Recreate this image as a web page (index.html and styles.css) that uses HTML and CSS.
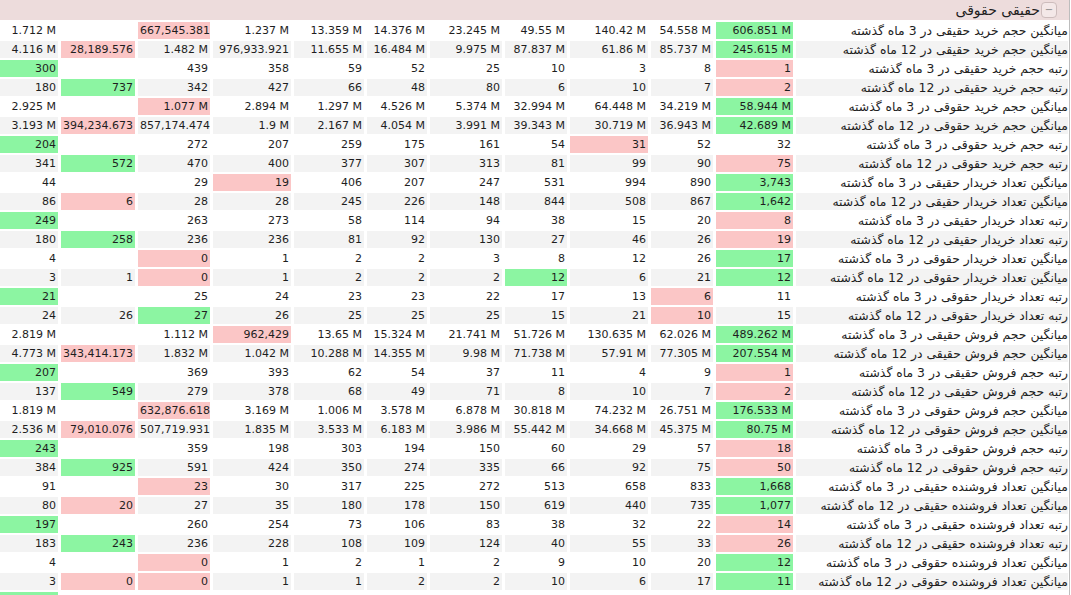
FILE: index.html
```html
<!DOCTYPE html>
<html lang="fa">
<head>
<meta charset="utf-8">
<title>حقیقی حقوقی</title>
<link rel="stylesheet" href="styles.css">
</head>
<body>
<div class="panel" dir="rtl">
  <div class="panel-head">
    <span class="toggle">−</span>
    <span class="title">حقیقی حقوقی</span>
  </div>
  <table class="grid">
    <colgroup>
      <col class="w-label"><col class="w11"><col class="w10"><col class="w9"><col class="w8"><col class="w7"><col class="w6"><col class="w5"><col class="w4"><col class="w3"><col class="w2"><col class="w1">
    </colgroup>
    <tbody>
      <tr><td class="lbl">میانگین حجم خرید حقیقی در 3 ماه گذشته</td><td class="g">606.851 M</td><td>54.558 M</td><td>140.42 M</td><td>49.55 M</td><td>23.245 M</td><td>14.376 M</td><td>13.359 M</td><td>1.237 M</td><td class="r">667,545.381</td><td></td><td>1.712 M</td></tr>
      <tr><td class="lbl">میانگین حجم خرید حقیقی در 12 ماه گذشته</td><td class="g">245.615 M</td><td>85.737 M</td><td>61.86 M</td><td>87.837 M</td><td>9.975 M</td><td>16.484 M</td><td>11.655 M</td><td>976,933.921</td><td>1.482 M</td><td class="r">28,189.576</td><td>4.116 M</td></tr>
      <tr><td class="lbl">رتبه حجم خرید حقیقی در 3 ماه گذشته</td><td class="r">1</td><td>8</td><td>3</td><td>10</td><td>25</td><td>52</td><td>59</td><td>358</td><td>439</td><td></td><td class="g">300</td></tr>
      <tr><td class="lbl">رتبه حجم خرید حقیقی در 12 ماه گذشته</td><td class="r">2</td><td>7</td><td>10</td><td>6</td><td>80</td><td>48</td><td>66</td><td>427</td><td>342</td><td class="g">737</td><td>180</td></tr>
      <tr><td class="lbl">میانگین حجم خرید حقوقی در 3 ماه گذشته</td><td class="g">58.944 M</td><td>34.219 M</td><td>64.448 M</td><td>32.994 M</td><td>5.374 M</td><td>4.526 M</td><td>1.297 M</td><td>2.894 M</td><td class="r">1.077 M</td><td></td><td>2.925 M</td></tr>
      <tr><td class="lbl">میانگین حجم خرید حقوقی در 12 ماه گذشته</td><td class="g">42.689 M</td><td>36.943 M</td><td>30.719 M</td><td>39.343 M</td><td>3.991 M</td><td>4.054 M</td><td>2.167 M</td><td>1.9 M</td><td>857,174.474</td><td class="r">394,234.673</td><td>3.193 M</td></tr>
      <tr><td class="lbl">رتبه حجم خرید حقوقی در 3 ماه گذشته</td><td>32</td><td>52</td><td class="r">31</td><td>54</td><td>161</td><td>175</td><td>259</td><td>207</td><td>272</td><td></td><td class="g">204</td></tr>
      <tr><td class="lbl">رتبه حجم خرید حقوقی در 12 ماه گذشته</td><td class="r">75</td><td>90</td><td>99</td><td>81</td><td>313</td><td>307</td><td>377</td><td>400</td><td>470</td><td class="g">572</td><td>341</td></tr>
      <tr><td class="lbl">میانگین تعداد خریدار حقیقی در 3 ماه گذشته</td><td class="g">3,743</td><td>890</td><td>994</td><td>531</td><td>247</td><td>207</td><td>406</td><td class="r">19</td><td>29</td><td></td><td>44</td></tr>
      <tr><td class="lbl">میانگین تعداد خریدار حقیقی در 12 ماه گذشته</td><td class="g">1,642</td><td>867</td><td>508</td><td>844</td><td>148</td><td>226</td><td>245</td><td>28</td><td>28</td><td class="r">6</td><td>86</td></tr>
      <tr><td class="lbl">رتبه تعداد خریدار حقیقی در 3 ماه گذشته</td><td class="r">8</td><td>20</td><td>15</td><td>38</td><td>94</td><td>114</td><td>58</td><td>273</td><td>263</td><td></td><td class="g">249</td></tr>
      <tr><td class="lbl">رتبه تعداد خریدار حقیقی در 12 ماه گذشته</td><td class="r">19</td><td>26</td><td>46</td><td>27</td><td>130</td><td>92</td><td>81</td><td>236</td><td>236</td><td class="g">258</td><td>180</td></tr>
      <tr><td class="lbl">میانگین تعداد خریدار حقوقی در 3 ماه گذشته</td><td class="g">17</td><td>26</td><td>12</td><td>8</td><td>3</td><td>2</td><td>2</td><td>1</td><td class="r">0</td><td></td><td>4</td></tr>
      <tr><td class="lbl">میانگین تعداد خریدار حقوقی در 12 ماه گذشته</td><td class="g">12</td><td>21</td><td>6</td><td class="g">12</td><td>2</td><td>2</td><td>2</td><td>1</td><td class="r">0</td><td>1</td><td>3</td></tr>
      <tr><td class="lbl">رتبه تعداد خریدار حقوقی در 3 ماه گذشته</td><td>11</td><td class="r">6</td><td>13</td><td>17</td><td>22</td><td>23</td><td>23</td><td>24</td><td>25</td><td></td><td class="g">21</td></tr>
      <tr><td class="lbl">رتبه تعداد خریدار حقوقی در 12 ماه گذشته</td><td>15</td><td class="r">10</td><td>21</td><td>15</td><td>25</td><td>25</td><td>25</td><td>26</td><td class="g">27</td><td>26</td><td>24</td></tr>
      <tr><td class="lbl">میانگین حجم فروش حقیقی در 3 ماه گذشته</td><td class="g">489.262 M</td><td>62.026 M</td><td>130.635 M</td><td>51.726 M</td><td>21.741 M</td><td>15.324 M</td><td>13.65 M</td><td class="r">962,429</td><td>1.112 M</td><td></td><td>2.819 M</td></tr>
      <tr><td class="lbl">میانگین حجم فروش حقیقی در 12 ماه گذشته</td><td class="g">207.554 M</td><td>77.305 M</td><td>57.91 M</td><td>71.738 M</td><td>9.98 M</td><td>14.355 M</td><td>10.288 M</td><td>1.042 M</td><td>1.832 M</td><td class="r">343,414.173</td><td>4.773 M</td></tr>
      <tr><td class="lbl">رتبه حجم فروش حقیقی در 3 ماه گذشته</td><td class="r">1</td><td>9</td><td>4</td><td>11</td><td>37</td><td>54</td><td>62</td><td>393</td><td>369</td><td></td><td class="g">207</td></tr>
      <tr><td class="lbl">رتبه حجم فروش حقیقی در 12 ماه گذشته</td><td class="r">2</td><td>7</td><td>10</td><td>8</td><td>71</td><td>49</td><td>68</td><td>378</td><td>279</td><td class="g">549</td><td>137</td></tr>
      <tr><td class="lbl">میانگین حجم فروش حقوقی در 3 ماه گذشته</td><td class="g">176.533 M</td><td>26.751 M</td><td>74.232 M</td><td>30.818 M</td><td>6.878 M</td><td>3.578 M</td><td>1.006 M</td><td>3.169 M</td><td class="r">632,876.618</td><td></td><td>1.819 M</td></tr>
      <tr><td class="lbl">میانگین حجم فروش حقوقی در 12 ماه گذشته</td><td class="g">80.75 M</td><td>45.375 M</td><td>34.668 M</td><td>55.442 M</td><td>3.986 M</td><td>6.183 M</td><td>3.533 M</td><td>1.835 M</td><td>507,719.931</td><td class="r">79,010.076</td><td>2.536 M</td></tr>
      <tr><td class="lbl">رتبه حجم فروش حقوقی در 3 ماه گذشته</td><td class="r">18</td><td>57</td><td>29</td><td>60</td><td>150</td><td>194</td><td>303</td><td>198</td><td>359</td><td></td><td class="g">243</td></tr>
      <tr><td class="lbl">رتبه حجم فروش حقوقی در 12 ماه گذشته</td><td class="r">50</td><td>75</td><td>92</td><td>66</td><td>335</td><td>274</td><td>350</td><td>424</td><td>591</td><td class="g">925</td><td>384</td></tr>
      <tr><td class="lbl">میانگین تعداد فروشنده حقیقی در 3 ماه گذشته</td><td class="g">1,668</td><td>833</td><td>658</td><td>513</td><td>272</td><td>225</td><td>317</td><td>30</td><td class="r">23</td><td></td><td>91</td></tr>
      <tr><td class="lbl">میانگین تعداد فروشنده حقیقی در 12 ماه گذشته</td><td class="g">1,077</td><td>735</td><td>440</td><td>619</td><td>150</td><td>178</td><td>180</td><td>35</td><td>27</td><td class="r">20</td><td>80</td></tr>
      <tr><td class="lbl">رتبه تعداد فروشنده حقیقی در 3 ماه گذشته</td><td class="r">14</td><td>22</td><td>32</td><td>38</td><td>83</td><td>106</td><td>73</td><td>254</td><td>260</td><td></td><td class="g">197</td></tr>
      <tr><td class="lbl">رتبه تعداد فروشنده حقیقی در 12 ماه گذشته</td><td class="r">26</td><td>33</td><td>55</td><td>40</td><td>124</td><td>109</td><td>108</td><td>228</td><td>236</td><td class="g">243</td><td>183</td></tr>
      <tr><td class="lbl">میانگین تعداد فروشنده حقوقی در 3 ماه گذشته</td><td class="g">12</td><td>20</td><td>10</td><td>9</td><td>2</td><td>1</td><td>2</td><td>1</td><td class="r">0</td><td></td><td>4</td></tr>
      <tr><td class="lbl">میانگین تعداد فروشنده حقوقی در 12 ماه گذشته</td><td class="g">11</td><td>17</td><td>6</td><td>10</td><td>2</td><td>2</td><td>1</td><td>1</td><td class="r">0</td><td class="r">0</td><td>3</td></tr>
      <tr class="peek"><td class="lbl"></td><td></td><td></td><td></td><td></td><td></td><td></td><td></td><td></td><td></td><td></td><td class="g"></td></tr>
    </tbody>
  </table>
</div>
</body>
</html>
```

FILE: styles.css
```css
html, body {
  margin: 0;
  padding: 0;
  background: #ffffff;
}

body {
  width: 1071px;
  height: 595px;
  overflow: hidden;
  font-family: "DejaVu Sans", Tahoma, sans-serif;
  color: #1e1e1e;
}

.panel {
  width: 1069px;
  border-right: 1px solid #bdbdbd;
  overflow: hidden;
  direction: rtl;
}

.panel-head {
  height: 20px;
  background: #eddcdc;
  display: flex;
  align-items: center;
  padding-right: 12px;
  gap: 1px;
}

.toggle {
  box-sizing: border-box;
  width: 16px;
  height: 16px;
  border: 1px solid #cdbcbc;
  border-radius: 4px;
  background: #f4e8e8;
  color: #8a8a8a;
  font-size: 10px;
  line-height: 13px;
  text-align: center;
}

.title {
  font-size: 14px;
  line-height: 20px;
  color: #1e1e1e;
}

.grid {
  direction: rtl;
  table-layout: fixed;
  width: 1074px;
  border-collapse: separate;
  border-spacing: 3px 2px;
  margin-right: -2px;
  font-size: 11px;
}

.grid td {
  box-sizing: border-box;
  height: 17px;
  padding: 0 2px;
  line-height: 17px;
  text-align: right;
  white-space: nowrap;
  overflow: hidden;
  direction: ltr;
  background: #ffffff;
}

.grid tr:nth-child(even) td {
  background: #f3f3f3;
}

.grid td.lbl {
  direction: rtl;
  text-align: right;
  padding: 0 0 0 2px;
  font-size: 12.4px;
}

.grid td.g,
.grid tr:nth-child(even) td.g {
  background: #8cf5a2;
}

.grid td.r,
.grid tr:nth-child(even) td.r {
  background: #fbc6c6;
}

.w-label { width: 272px; }
.w11 { width: 77px; }
.w10 { width: 62px; }
.w9 { width: 78px; }
.w8 { width: 62px; }
.w7 { width: 72px; }
.w6 { width: 60px; }
.w5 { width: 70px; }
.w4 { width: 78px; }
.w3 { width: 72px; }
.w2 { width: 74px; }
.w1 { width: 58px; }
```
